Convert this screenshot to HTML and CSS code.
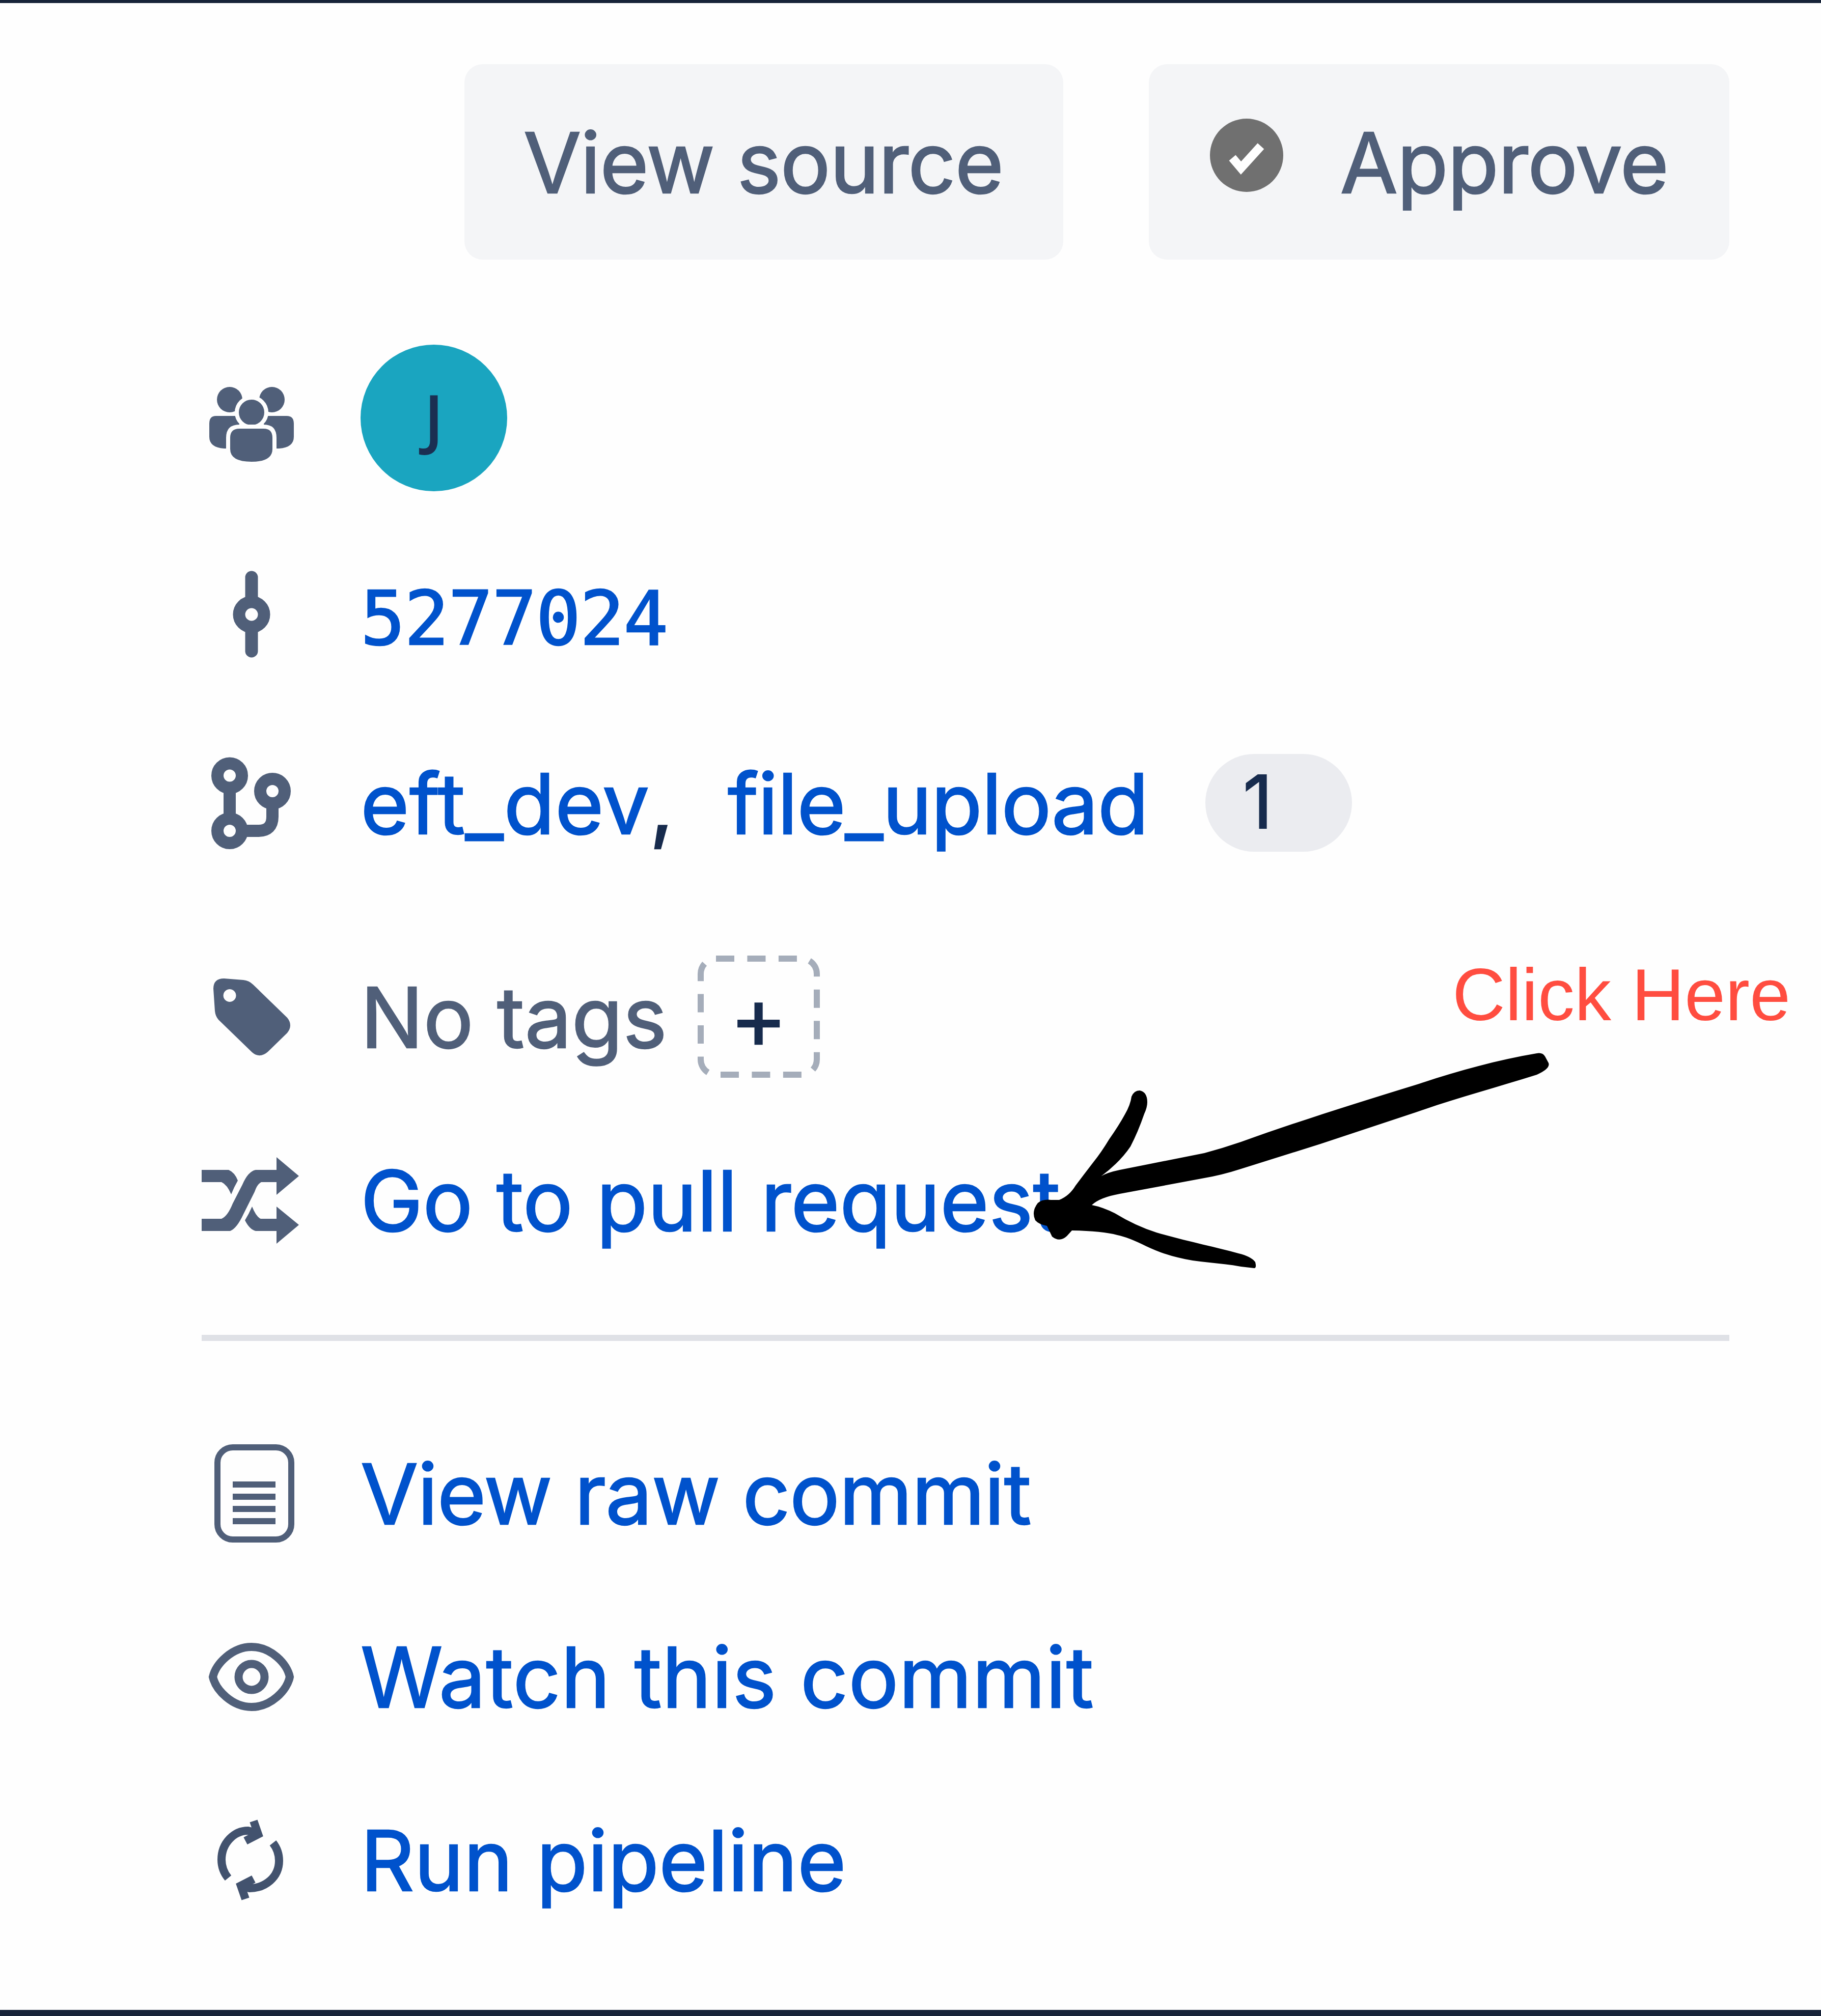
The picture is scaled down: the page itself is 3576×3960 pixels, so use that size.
FILE: index.html
```html
<!DOCTYPE html>
<html lang="en">
<head>
<meta charset="utf-8">
<title>Commit details</title>
<link rel="stylesheet" href="styles.css">
</head>
<body>
<main class="panel">
  <header class="actions">
    <button class="button"><span class="label t-source">View source</span></button>
    <button class="button button-approve">
      <svg class="check" viewBox="0 0 144 144"><circle cx="72" cy="72" r="72" fill="#707070"/><path d="M44 77 61 97 100 54" fill="none" stroke="#fff" stroke-width="17"/></svg>
      <span class="label t-approve">Approve</span>
    </button>
  </header>

  <section class="rows">
    <div class="row row-people">
      <svg class="icon" viewBox="396 721 196 200">
        <g fill="#505f79" stroke="#fefefe" stroke-width="8">
          <g stroke="none">
            <circle cx="451" cy="785" r="25"/><circle cx="534" cy="785" r="25"/>
            <path d="M424 817H470V881H440Q411 879 411 858V832Q411 817 424 817ZM563 817H518V881H548Q577 879 577 858V832Q577 817 563 817Z"/>
          </g>
          <circle cx="494" cy="810" r="29"/>
          <path d="M470 838H518Q539 838 539 860V882Q539 911 494 911Q448 911 448 882V860Q448 838 470 838Z"/>
        </g>
      </svg>
      <span class="avatar">J</span>
    </div>
    <div class="row row-hash">
      <svg class="icon" viewBox="396 1106 196 200">
        <path d="M494 1133V1278" stroke="#505f79" stroke-width="25" stroke-linecap="round"/>
        <circle cx="494" cy="1206" r="24.500" fill="#fefefe" stroke="#505f79" stroke-width="24"/>
      </svg>
      <a class="link hash">5277024</a>
    </div>
    <div class="row row-branches">
      <svg class="icon" viewBox="396 1477 196 200">
        <g fill="none" stroke="#505f79" stroke-width="24">
          <path d="M451 1524V1632H507Q535 1632 535 1604V1554"/>
          <g fill="#fefefe"><circle cx="451" cy="1523.500" r="24"/><circle cx="451" cy="1632" r="24"/><circle cx="535" cy="1554" r="24"/></g>
        </g>
      </svg>
      <a class="label link t-eft">eft_dev</a><span class="label comma">,</span>
      <a class="label link t-file">file_upload</a>
      <span class="count">1</span>
    </div>
    <div class="row">
      <svg class="icon" viewBox="396 1897 196 200">
        <path fill="#505f79" fill-rule="evenodd" d="M419 1942Q419 1922 440 1922L478 1925Q489 1926 497 1934L564 1999Q576 2014 564 2029L526 2066Q510 2080 495 2067L429 2003Q423 1996 422 1986ZM451 1943a12.500 12.500 0 1 0 .1 0Z"/>
      </svg>
      <span class="label muted">No tags</span>
      <button class="add">
        <svg class="dashes" viewBox="0 0 240 240"><rect x="6" y="6" width="228" height="228" rx="30" fill="none" stroke="#a5adba" stroke-width="12" stroke-dasharray="36 25.460"/></svg>
        <span class="plus">+</span>
      </button>
    </div>
    <div class="row">
      <svg class="icon" viewBox="396 2257 196 200">
        <path fill="#505f79" d="M396 2298H449Q461 2303 467 2319Q460 2331 454 2346Q446 2327 435 2322H396ZM396 2394H435Q447 2389 457 2364L476 2327Q487 2301 502 2298H543V2273L587 2310L543 2347V2322H513Q505 2326 500 2341L478 2385Q465 2413 452 2418H396ZM495 2370Q503 2390 512 2394H543V2370L587 2406L543 2443V2418H502Q490 2415 481 2397Q489 2384 495 2370Z"/>
      </svg>
      <a class="label link">Go to pull request</a>
    </div>
  </section>

  <hr class="divider">

  <section class="rows">
    <div class="row">
      <svg class="icon" viewBox="396 2833 196 200">
        <g fill="none" stroke="#505f79" stroke-width="12">
          <rect x="427" y="2843" width="145" height="181" rx="30"/>
          <path d="M457 2916H541M457 2940H541M457 2964H541M457 2988H541"/>
        </g>
      </svg>
      <a class="label link t-raw">View raw commit</a>
    </div>
    <div class="row">
      <svg class="icon" viewBox="396 3193 196 200">
        <g fill="none" stroke="#505f79" stroke-width="16">
          <path d="M418 3294C424 3268 456 3235 494 3235S564 3268 569 3294C564 3320 532 3353 494 3353S424 3320 418 3294Z"/>
          <circle cx="494" cy="3294" r="25.500"/>
        </g>
      </svg>
      <a class="label link t-watch">Watch this commit</a>
    </div>
    <div class="row">
      <svg class="icon" viewBox="396 3553 196 200">
        <g fill="none" stroke="#42526e" stroke-width="16">
          <path d="M448 3689A57 57 0 0 1 435 3653C435 3620 460 3596 487 3596L507 3601M536 3620A57 57 0 0 1 548 3655C548 3688 520 3709 490 3709L474 3705"/>
          <path d="M498 3577 507 3603 482 3616M482 3730 473 3704 498 3691"/>
        </g>
        <path fill="#42526e" d="M490 3590 516 3606 488 3614ZM490 3716 464 3701 492 3692Z"/>
      </svg>
      <a class="label link">Run pipeline</a>
    </div>
  </section>
</main>

<span class="note">Click Here</span>
<svg class="arrow" viewBox="2000 2040 1080 480">
  <path d="M3018 2069Q3029 2067 3034 2075L3041 2088Q3045 2099 3018 2111C2935 2137 2860 2157 2780 2185L2593 2247L2437 2296Q2400 2308 2365 2314L2199 2345Q2160 2352 2144 2367Q2165 2371 2189 2383Q2230 2408 2271 2421C2325 2437 2385 2449 2432 2462Q2457 2468 2465 2479Q2468 2491 2463 2491L2437 2488C2395 2480 2350 2480 2313 2470Q2285 2464 2251 2448Q2215 2430 2194 2426Q2165 2418 2105 2417L2095 2428Q2081 2441 2066 2429L2056 2408Q2040 2405 2033 2397Q2025 2380 2038 2363Q2048 2355 2064 2357H2080Q2100 2349 2112 2329Q2130 2305 2147 2283Q2163 2263 2178 2238Q2197 2211 2209 2189Q2220 2170 2222 2154Q2227 2142 2238 2142Q2253 2145 2253 2165Q2253 2175 2247 2188Q2235 2223 2220 2252Q2200 2282 2163 2310Q2175 2303 2199 2298L2365 2265Q2402 2255 2437 2243C2545 2204 2660 2168 2780 2131C2855 2106 2935 2083 3018 2069Z"/>
</svg>
</body>
</html>
```
FILE: styles.css
```css
* { box-sizing: border-box; }

body {
  position: relative;
  margin: 0;
  height: 3960px;
  border-top: 6px solid #172338;
  border-bottom: 12px solid #172338;
  background: #fefefe;
  color: #172b4d;
  font-family: Inter, "Liberation Sans", sans-serif;
  font-size: 164px;
  overflow: hidden;
}

.panel {
  display: flex;
  flex-direction: column;
  padding: 120px 180px 0 396px;
}

.actions {
  display: flex;
  justify-content: flex-end;
  gap: 168px;
  margin-bottom: 56px;
}

.button {
  display: flex;
  align-items: center;
  justify-content: space-between;
  width: 1176px;
  height: 384px;
  padding: 0 120px 0 116px;
  border: 0;
  border-radius: 36px;
  background: #f4f5f7;
  color: #505f79;
  font: inherit;
  white-space: nowrap;
}

.button-approve {
  width: 1140px;
  padding-left: 120px;
}

.check {
  width: 144px;
  height: 144px;
  margin-bottom: 26px;
}

.rows {
  display: flex;
  flex-direction: column;
}

.row {
  display: flex;
  align-items: center;
  height: 360px;
  line-height: 360px;
  white-space: nowrap;
}

.row-people { height: 510px; }
.row-hash { height: 261px; }
.row-branches { height: 480px; }

.icon {
  flex: none;
  width: 196px;
  height: 200px;
  margin-right: 116px;
}

.label {
  padding-top: 3px;
  -webkit-text-stroke: 2.5px currentColor;
}

.t-source { letter-spacing: -1.3px; }
.t-approve { letter-spacing: -1.2px; }
.t-eft { letter-spacing: 0.5px; }
.t-file { letter-spacing: -1.3px; }
.t-raw { letter-spacing: -1.1px; }
.t-watch { letter-spacing: 0.6px; }

.link { color: #0052cc; }
.muted { color: #505f79; }

.avatar {
  width: 288px;
  height: 288px;
  border-radius: 50%;
  background: #1aa5c0;
  color: #1b2f52;
  font-family: "Open Sans", sans-serif;
  font-size: 128px;
  font-weight: 600;
  line-height: 284px;
  text-align: center;
}

.hash {
  padding-top: 17px;
  font-family: "DejaVu Sans Mono", monospace;
  font-size: 146px;
  letter-spacing: -1.8px;
  -webkit-text-stroke: 2.5px currentColor;
}

.comma { margin-right: 106px; }

.count {
  width: 288px;
  height: 192px;
  margin-left: 112px;
  padding-left: 74px;
  border-radius: 96px;
  background: #ebecf0;
  font-size: 144px;
  line-height: 188px;
  -webkit-text-stroke: 2px currentColor;
}

.add {
  position: relative;
  width: 240px;
  height: 240px;
  margin-left: 60px;
  padding: 0;
  border: 0;
  background: none;
  color: #172b4d;
  font: 400 172px Inter, sans-serif;
  -webkit-text-stroke: 2px currentColor;
}

.dashes {
  position: absolute;
  inset: 0;
}

.divider {
  width: 100%;
  height: 12px;
  margin: 85px 0 119px;
  border: 0;
  background: #dfe1e6;
}

.note {
  position: absolute;
  top: 1869px;
  left: 2852px;
  color: #ff4d40;
  font: 144px/160px "Liberation Sans", sans-serif;
  white-space: nowrap;
}

.arrow {
  position: absolute;
  top: 2034px;
  left: 2000px;
  width: 1080px;
  height: 480px;
}
```
